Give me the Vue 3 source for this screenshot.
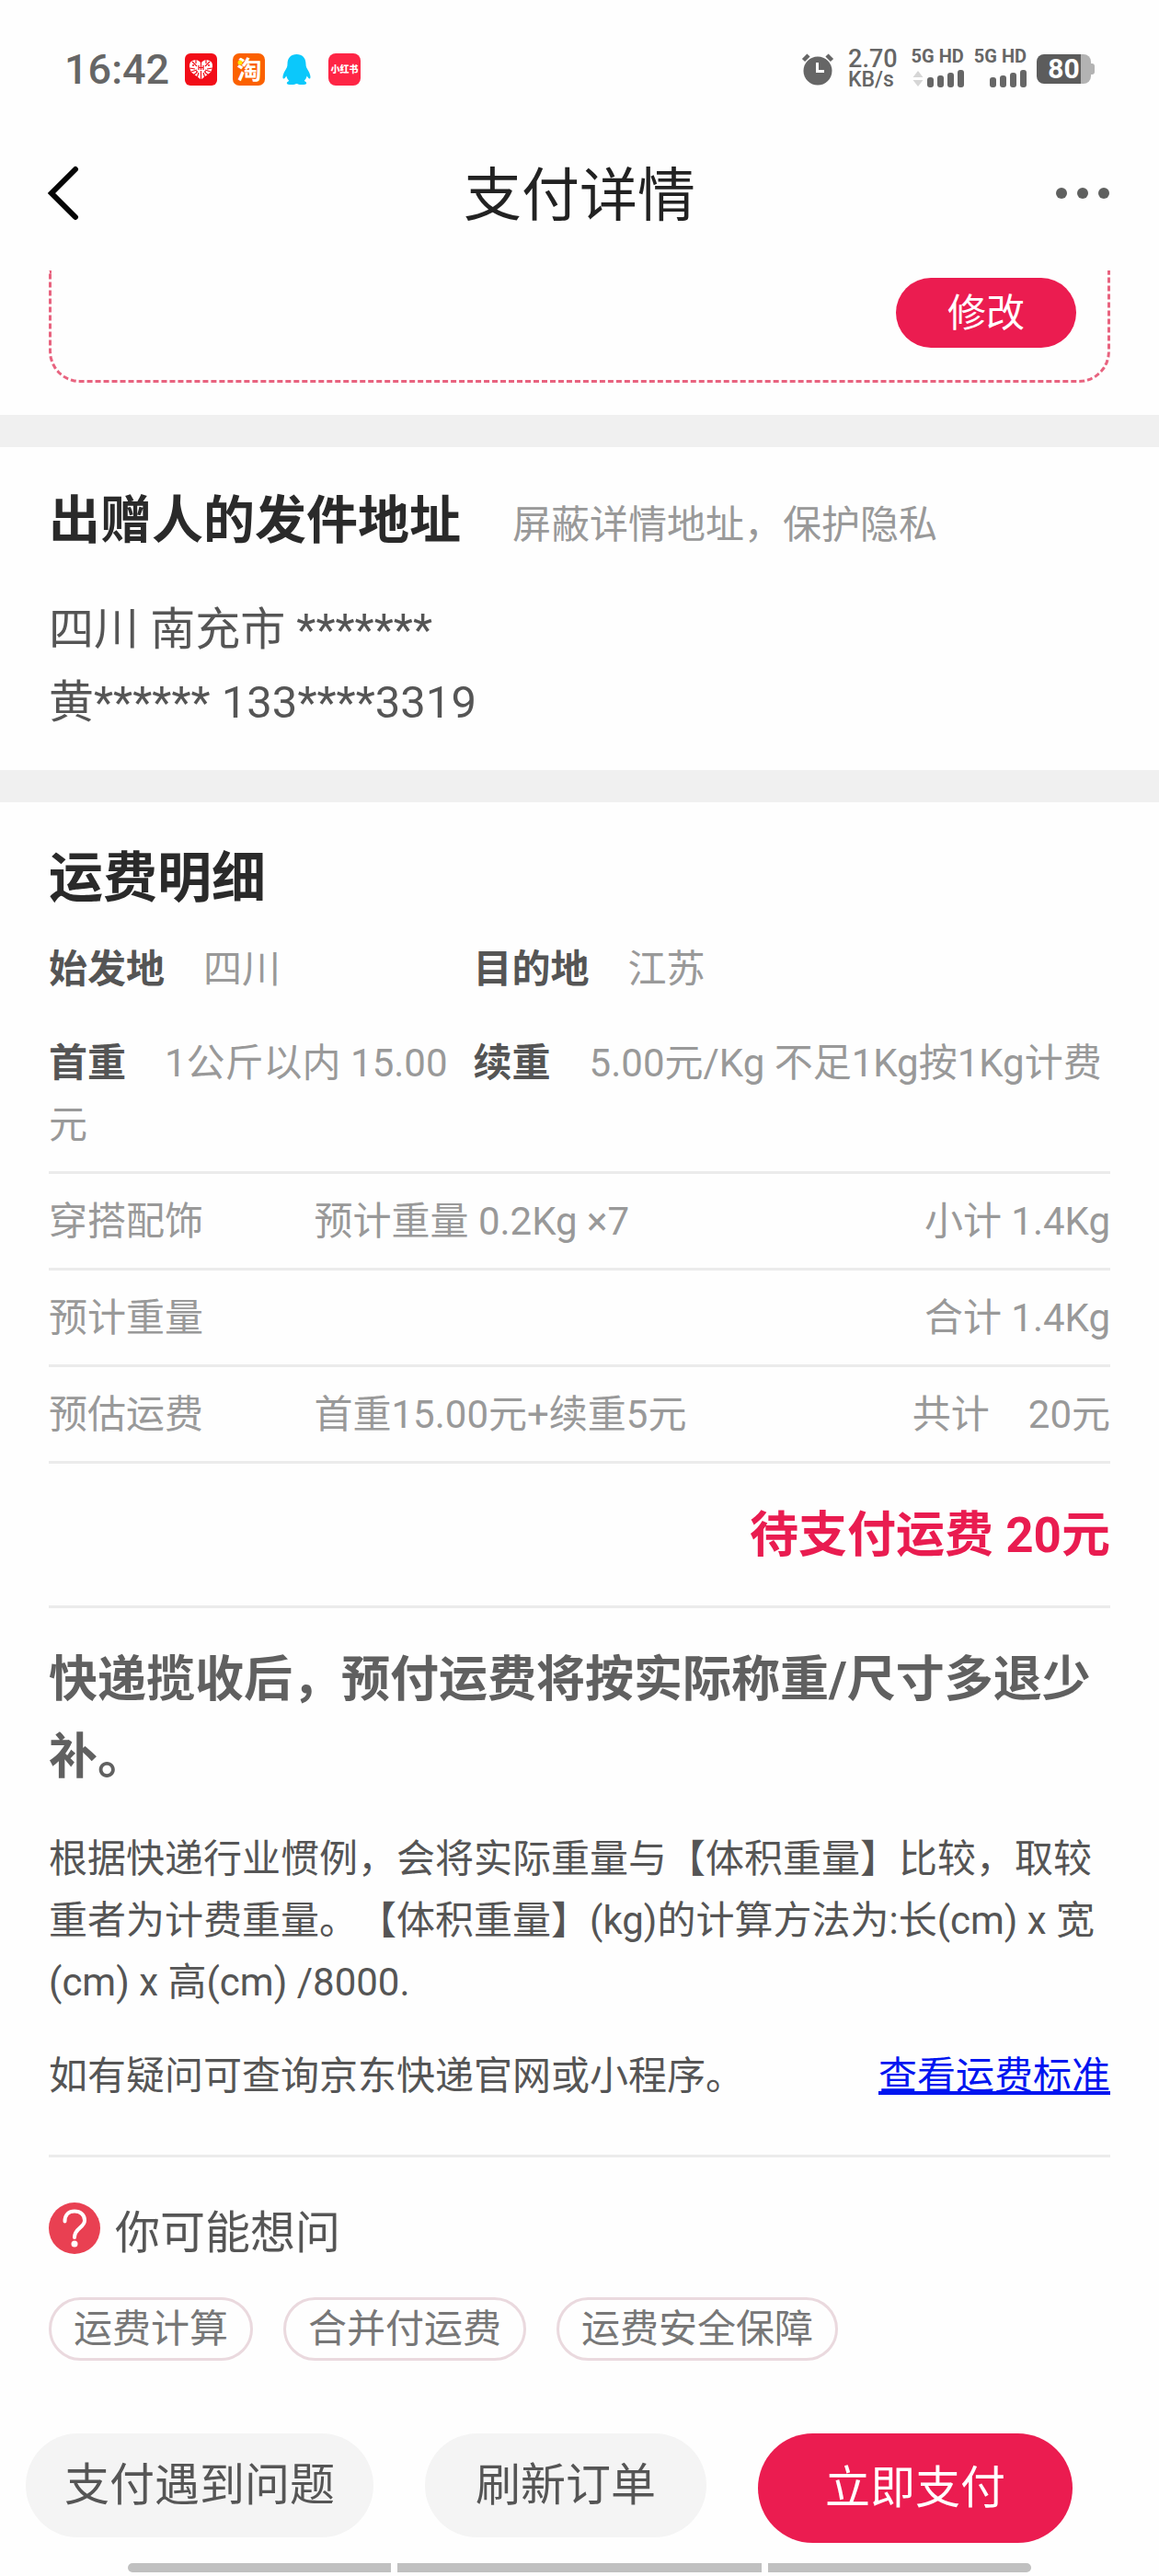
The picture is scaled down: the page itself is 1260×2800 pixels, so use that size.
<script setup>
const bars = [11, 13, 16, 19]

const address = {
  region: '四川 南充市 *******',
  contact: '黄****** 133****3319',
}

const route = [
  { label: '始发地', value: '四川' },
  { label: '目的地', value: '江苏' },
  { label: '首重', value: '1公斤以内 15.00元' },
  { label: '续重', value: '5.00元/Kg 不足1Kg按1Kg计费' },
]

const rows = [
  { name: '穿搭配饰', detail: '预计重量 0.2Kg ×7', sum: '小计 1.4Kg' },
  { name: '预计重量', detail: '', sum: '合计 1.4Kg' },
  { name: '预估运费', detail: '首重15.00元+续重5元', sum: '共计\u300020元' },
]

const questions = ['运费计算', '合并付运费', '运费安全保障']
</script>

<template>
  <div class="page">
    <div class="status">
      <div class="status-left">
        <span class="time">16:42</span>
        <svg class="app" viewBox="0 0 35 35" aria-hidden="true">
          <rect width="35" height="35" rx="6" fill="#f20d18" />
          <path d="M17.500 28.500 L7 20.500 Q3.500 14 6 9.500 Q9 6.500 12.500 7 Q15.500 7.500 17.500 10.500 Q19.500 7.500 22.500 7 Q26 6.500 29 9.500 Q31.500 14 28 20.500 Z" fill="#fff" />
          <g stroke="#f20d18" stroke-width="1.200" fill="none">
            <path d="M17.500 10v3M17.500 19v10M5 16l6 1M30 16l-6 1M8 9l5 5M27 9l-5 5M12 7v4M23 7v4M7 20l6-2M28 20l-6-2M13 27l2-6M22 27l-2-6M10 23l3-2M25 23l-3-2" />
            <path d="M15 13v5M20 13v5M15 15.500h5M17.500 13v5" />
          </g>
          <g fill="#f20d18">
            <circle cx="9" cy="13" r="1" /><circle cx="26" cy="13" r="1" />
            <circle cx="13" cy="20" r="1" /><circle cx="22" cy="20" r="1" />
          </g>
        </svg>
        <svg class="app" viewBox="0 0 35 35" aria-hidden="true">
          <rect width="35" height="35" rx="7" fill="#fb6100" />
          <text x="18" y="28" text-anchor="middle" font-size="27" font-weight="700" fill="#fff">淘</text>
          <circle cx="8" cy="10" r="2.500" fill="#ffe400" />
        </svg>
        <svg class="app" viewBox="0 0 35 35" aria-hidden="true">
          <path d="M17.500 1C11.500 1 7.500 5 7.500 11.500C7.500 15 6.500 16 4.500 19.500C2.500 23 1.800 27 3.200 27.500C4.200 27.800 5.500 26 6.300 24.500C7 27 8 28.500 9.300 30C7.500 30.800 6.800 31.500 6.800 32.500C6.800 33.800 9 34 12 34C15 34 16 33.500 17.500 33C19 33.500 20 34 23 34C26 34 28.200 33.800 28.200 32.500C28.200 31.500 27.500 30.800 25.700 30C27 28.500 28 27 28.700 24.500C29.500 26 30.800 27.800 31.800 27.500C33.200 27 32.500 23 30.500 19.500C28.500 16 27.500 15 27.500 11.500C27.500 5 23.500 1 17.500 1Z" fill="#0bc8fb" />
        </svg>
        <svg class="app" viewBox="0 0 35 35" aria-hidden="true">
          <rect width="35" height="35" rx="8" fill="#fe2545" />
          <text x="17.500" y="21" text-anchor="middle" font-size="10" font-weight="900" fill="#fff">小红书</text>
        </svg>
      </div>
      <div class="status-right">
        <svg class="alarm" viewBox="0 0 36 36" aria-hidden="true">
          <circle cx="18" cy="20" r="15.500" fill="#666" />
          <path d="M2.500 8.500L8 3M33.500 8.500L28 3" stroke="#666" stroke-width="4.500" />
          <path d="M17.500 11v9.500h7.500" fill="none" stroke="#fff" stroke-width="3" />
        </svg>
        <div class="speed">
          <span class="speed-num">2.70</span>
          <span class="speed-unit">KB/s</span>
        </div>
        <div v-for="sim in 2" :key="sim" class="sim">
          <span>5G HD</span>
          <div class="signal">
            <svg v-if="sim === 1" class="traffic" viewBox="0 0 12 19" aria-hidden="true">
              <path d="M6 1l5.500 7H.5zM6 18l5.500-7H.5z" fill="#d6d6d6" />
            </svg>
            <i v-for="h in bars" :key="h" :style="{ height: h + 'px' }"></i>
          </div>
        </div>
        <div class="battery"><span>80</span></div>
      </div>
    </div>

    <header class="nav">
      <button class="icon-btn" type="button" aria-label="返回">
        <svg width="40" height="64" viewBox="0 0 40 64">
          <path d="M34 4L8 30l26 26" fill="none" stroke="#050505" stroke-width="6" stroke-linecap="round" />
        </svg>
      </button>
      <h1>支付详情</h1>
      <button class="icon-btn" type="button" aria-label="更多">
        <svg width="64" height="18" viewBox="0 0 64 18">
          <g fill="#5f605f"><circle cx="6" cy="7" r="6" /><circle cx="29" cy="7" r="6" /><circle cx="52" cy="7" r="6" /></g>
        </svg>
      </button>
    </header>

    <main>
      <section class="receiver">
        <div class="receiver-card">
          <button class="edit" type="button">修改</button>
        </div>
      </section>

      <section class="sender">
        <div class="sender-head">
          <h2>出赠人的发件地址</h2>
          <span>屏蔽详情地址，保护隐私</span>
        </div>
        <address>
          <p>{{ address.region }}</p>
          <p>{{ address.contact }}</p>
        </address>
      </section>

      <section class="freight">
        <h2>运费明细</h2>
        <dl class="route">
          <div v-for="item in route" :key="item.label">
            <dt>{{ item.label }}</dt>
            <dd>{{ item.value }}</dd>
          </div>
        </dl>
        <table>
          <tbody>
            <tr v-for="row in rows" :key="row.name">
              <td class="name">{{ row.name }}</td>
              <td>{{ row.detail }}</td>
              <td class="sum">{{ row.sum }}</td>
            </tr>
          </tbody>
        </table>
        <p class="due">待支付运费 20元</p>
        <div class="notes">
          <p class="strong">快递揽收后，预付运费将按实际称重/尺寸多退少补。</p>
          <p class="rule">根据快递行业惯例，会将实际重量与【体积重量】比较，取较重者为计费重量。【体积重量】(kg)的计算方法为:长(cm) x 宽(cm) x 高(cm) /8000.</p>
          <div class="help">
            <span>如有疑问可查询京东快递官网或小程序。</span>
            <a href="#">查看运费标准</a>
          </div>
        </div>
        <div class="ask">
          <div class="ask-head">
            <svg width="56" height="56" viewBox="0 0 56 56" aria-hidden="true">
              <circle cx="28" cy="28" r="28" fill="#e94052" />
              <path d="M17.500 20.500C17.500 13 22 9.500 28 9.500C34.500 9.500 39 13.500 39 19.500C39 27.500 28 27.500 28 38" fill="none" stroke="#fff" stroke-width="4" stroke-linecap="round" />
              <circle cx="28" cy="45" r="3.500" fill="#fff" />
            </svg>
            <h3>你可能想问</h3>
          </div>
          <div class="chips">
            <button v-for="q in questions" :key="q" type="button">{{ q }}</button>
          </div>
        </div>
      </section>
    </main>

    <footer>
      <div class="actions">
        <button class="problem" type="button">支付遇到问题</button>
        <button class="refresh" type="button">刷新订单</button>
        <button class="pay" type="button">立即支付</button>
      </div>
      <div class="gesture"><i></i><i class="mid"></i><i></i></div>
    </footer>
  </div>
</template>

<style>
body {
  margin: 0;
  background: #fefefe;
}
</style>

<style scoped>
.page {
  font-family: Roboto, "Noto Sans CJK SC", sans-serif;
  font-size: 42px;
  line-height: 67px;
  color: #555;
  text-spacing-trim: space-all;
}

h1, h2, h3, p, dl, dd, address {
  margin: 0;
  font-style: normal;
}

button {
  border: 0;
  padding: 0;
  background: none;
  font: inherit;
  color: inherit;
  white-space: nowrap;
}

/* Status bar */
.status {
  display: flex;
  justify-content: space-between;
  align-items: center;
  height: 150px;
  padding: 0 74px 0 70px;
  color: #666;
}

.status-left {
  display: flex;
  align-items: center;
  gap: 17px;
}

.time {
  font-size: 45px;
  font-weight: 500;
}

.app {
  width: 35px;
  height: 35px;
}

.status-right {
  display: flex;
  align-items: center;
  gap: 11px;
}

.alarm {
  width: 36px;
  height: 36px;
  margin-right: 4px;
}

.speed {
  display: flex;
  flex-direction: column;
  font-weight: 500;
}

.speed-num {
  font-size: 27px;
  line-height: 24px;
}

.speed-unit {
  font-size: 23px;
  line-height: 22px;
}

.speed + .sim {
  margin-left: 4px;
}

.sim {
  padding-bottom: 4px;
  font-size: 20px;
  font-weight: 700;
  line-height: 20px;
}

.signal {
  display: flex;
  justify-content: flex-end;
  align-items: flex-end;
  gap: 4px;
  margin-top: 5px;
}

.signal i {
  width: 7px;
  border-radius: 3px;
  background: #666;
}

.traffic {
  width: 12px;
  height: 19px;
}

.battery {
  position: relative;
  width: 59px;
  height: 32px;
  border-radius: 8px;
  background: linear-gradient(to right, #5c5c5c 48px, #b3b3b3 48px);
  color: #fff;
  font-size: 30px;
  font-weight: 700;
  line-height: 32px;
  text-align: center;
}

.battery::after {
  content: "";
  position: absolute;
  top: 10px;
  right: -4px;
  width: 4px;
  height: 12px;
  border-radius: 0 3px 3px 0;
  background: #b3b3b3;
}

/* Navigation */
.nav {
  display: flex;
  justify-content: space-between;
  align-items: center;
  height: 124px;
  padding: 0 48px;
}

.nav h1 {
  font-size: 63px;
  font-weight: 400;
  color: #222;
}

.icon-btn {
  display: flex;
  width: 64px;
}

/* Sections */
section {
  padding: 0 53px;
}

section + section {
  border-top: 35px solid #f0f0f0;
}

h2 {
  font-size: 56px;
  font-weight: 700;
  line-height: 80px;
  color: #2a2a2a;
}

.receiver {
  padding-top: 20px;
  padding-bottom: 35px;
}

.receiver-card {
  display: flex;
  justify-content: flex-end;
  padding: 8px 34px 35px;
  border: 3px dashed #e8637f;
  border-top: 0;
  border-radius: 0 0 34px 34px;
}

.edit {
  width: 196px;
  height: 76px;
  border-radius: 38px;
  background: #eb1c50;
  color: #fff;
}

.sender {
  padding-top: 40px;
  padding-bottom: 34px;
}

.sender-head {
  display: flex;
  align-items: baseline;
  gap: 56px;
  color: #999;
}

address {
  margin-top: 39px;
  font-size: 49px;
  line-height: 79px;
}

/* Freight */
.freight {
  padding-top: 43px;
}

.freight h2 {
  font-size: 59px;
}

.route {
  display: grid;
  grid-template-columns: 2fr 3fr;
  row-gap: 35px;
  padding: 25px 0 17px;
}

dt {
  display: inline;
  margin-right: 42px;
  font-weight: 700;
}

dd {
  display: inline;
  color: #999;
}

table {
  width: 100%;
  border-collapse: separate;
  border-spacing: 0;
  border-top: 3px solid #ebebeb;
  color: #999;
}

td {
  box-sizing: border-box;
  height: 105px;
  padding: 0;
  border-bottom: 3px solid #ebebeb;
}

.name {
  width: 25%;
}

.sum {
  text-align: right;
}

.due {
  border-bottom: 3px solid #ebebeb;
  padding: 38px 0 36px;
  font-size: 53px;
  font-weight: 700;
  line-height: 80px;
  text-align: right;
  color: #e91c50;
}

.notes {
  padding: 36px 0 52px;
  border-bottom: 3px solid #ebebeb;
}

.strong {
  font-size: 53px;
  font-weight: 700;
  line-height: 84px;
  color: #606060;
}

.rule {
  margin: 35px 0;
}

.help {
  display: flex;
  justify-content: space-between;
}

.help a {
  color: #0015f0;
  text-decoration-thickness: 4px;
  text-decoration-skip-ink: none;
  text-underline-offset: 2px;
}

/* Questions */
.ask {
  padding: 49px 0 79px;
}

.ask-head {
  display: flex;
  gap: 16px;
  height: 62px;
}

.ask-head h3 {
  align-self: flex-end;
  font-size: 49px;
  font-weight: 400;
  line-height: 56px;
}

.chips {
  display: flex;
  gap: 33px;
  margin-top: 41px;
}

.chips button {
  height: 69px;
  padding: 0 24px;
  border: 3px solid #ead9de;
  border-radius: 35px;
  line-height: 60px;
  color: #777;
}

/* Footer */
.actions {
  display: flex;
  align-items: flex-start;
  gap: 56px;
  padding: 0 28px;
  font-size: 49px;
}

.actions button {
  height: 113px;
  border-radius: 57px;
  background: #f4f4f4;
}

.actions .problem {
  padding: 0 42px;
}

.actions .refresh {
  padding: 0 55px;
}

.actions .pay {
  height: 119px;
  padding: 0 73px;
  border-radius: 60px;
  background: #eb1c50;
  color: #fff;
}

.gesture {
  display: flex;
  gap: 7px;
  padding: 22px 139px 3px;
}

.gesture i {
  flex: 286;
  height: 10px;
  background: #c0c0c0;
}

.gesture .mid {
  flex: 395;
}

.gesture i:first-child {
  border-radius: 5px 0 0 5px;
}

.gesture i:last-child {
  border-radius: 0 5px 5px 0;
}
</style>
